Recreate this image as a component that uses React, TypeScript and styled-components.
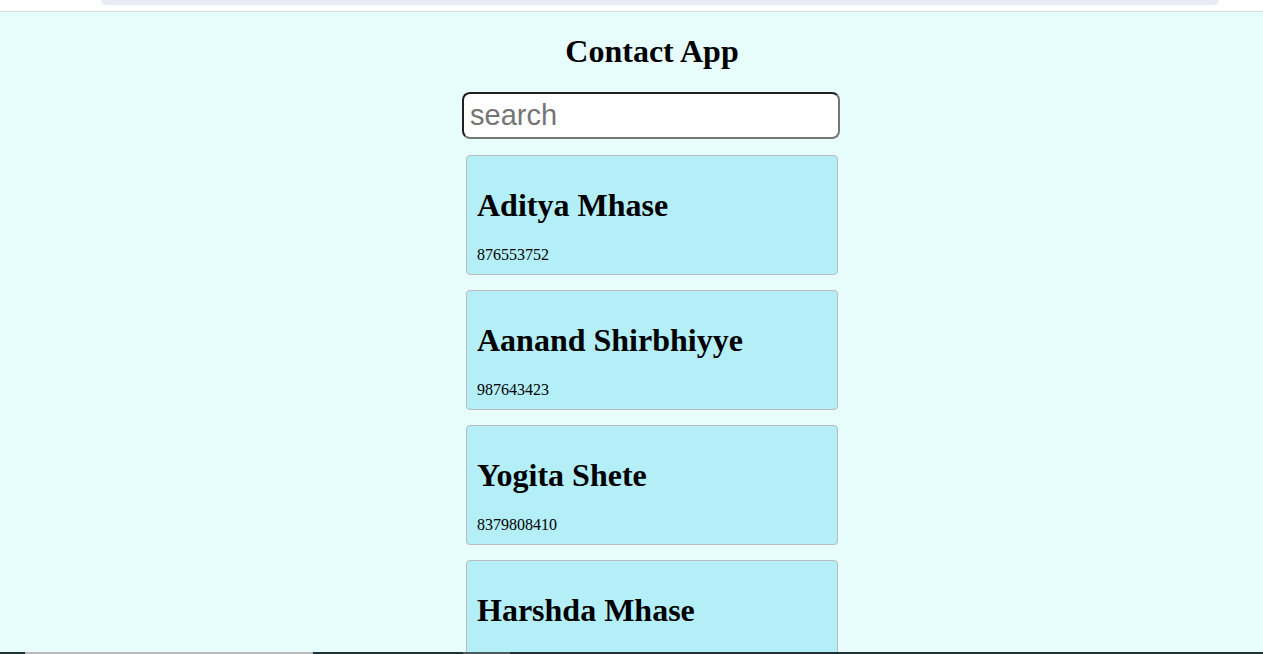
import React, { useState } from 'react';
import styled, { createGlobalStyle } from 'styled-components';

/* --------------------------------- styles --------------------------------- */

const GlobalStyle = createGlobalStyle`
  html, body {
    margin: 0;
    padding: 0;
    height: 100%;
    overflow: hidden;
  }
  body {
    font-family: "Liberation Serif", "Times New Roman", serif;
    color: #000;
  }
`;

const Screen = styled.div`
  display: flex;
  flex-direction: column;
  height: 100vh;
  background: #e6fdfc;
`;

const Chrome = styled.div`
  flex: 0 0 11px;
  display: flex;
  justify-content: flex-start;
  padding: 0 44px 0 101px;
  background: #ffffff;
  border-bottom: 1px solid #dadce0;
`;

const ChromeBar = styled.div`
  flex: 1;
  height: 5px;
  background: #e9ecf5;
  border-radius: 0 0 8px 8px;
`;

const Main = styled.main`
  flex: 1;
  min-height: 0;
  overflow: hidden;
  display: flex;
  flex-direction: column;
  align-items: center;
  padding-left: 41px;
`;

const Title = styled.h1`
  margin: 21.44px 0;
  font-size: 32px;
  font-weight: bold;
  line-height: normal;
`;

const Search = styled.input`
  box-sizing: border-box;
  width: 378px;
  height: 47px;
  margin-right: 2px;
  padding: 5px 6px;
  font-family: "Liberation Sans", Arial, sans-serif;
  font-size: 29px;
  border-radius: 8px;
  border-width: 2px;
  border-style: solid;
  border-color: #1f1f1f #767676 #767676 #1f1f1f;
  background: #fff;
  outline: none;

  &::placeholder {
    color: #757575;
  }
`;

const List = styled.div`
  display: flex;
  flex-direction: column;
  gap: 15px;
  margin-top: 16px;
`;

const Card = styled.div`
  box-sizing: border-box;
  width: 372px;
  padding: 10px;
  background: #b4eef7;
  border: 1px solid #bcbcbc;
  border-radius: 4px;
`;

const Name = styled.h1`
  margin: 21.44px 0;
  font-size: 32px;
  font-weight: bold;
  line-height: normal;
`;

const Phone = styled.p`
  margin: 0;
  font-size: 16px;
  line-height: normal;
`;

const Taskbar = styled.div`
  flex: 0 0 2px;
  display: flex;
  background: #1d3336;
`;

const TaskSegment = styled.div<{ $left: number; $width: number; $color: string }>`
  margin-left: ${(p) => p.$left}px;
  width: ${(p) => p.$width}px;
  background: ${(p) => p.$color};
`;

/* ---------------------------------- data ---------------------------------- */

type Contact = {
  name: string;
  phone: string;
};

const contacts: Contact[] = [
  { name: 'Aditya Mhase', phone: '876553752' },
  { name: 'Aanand Shirbhiyye', phone: '987643423' },
  { name: 'Yogita Shete', phone: '8379808410' },
  { name: 'Harshda Mhase', phone: '9823456712' },
];

/* -------------------------------- component ------------------------------- */

const App = () => {
  const [query, setQuery] = useState('');

  const shown = contacts.filter((c) =>
    c.name.toLowerCase().includes(query.toLowerCase()),
  );

  return (
    <Screen>
      <GlobalStyle />
      <Chrome>
        <ChromeBar />
      </Chrome>

      <Main>
        <Title>Contact App</Title>
        <Search
          type="text"
          placeholder="search"
          value={query}
          onChange={(e) => setQuery(e.target.value)}
        />
        <List>
          {shown.map((c) => (
            <Card key={c.name}>
              <Name>{c.name}</Name>
              <Phone>{c.phone}</Phone>
            </Card>
          ))}
        </List>
      </Main>

      <Taskbar>
        <TaskSegment $left={25} $width={288} $color="#b9b9b9" />
        <TaskSegment $left={150} $width={47} $color="#4a5b5e" />
      </Taskbar>
    </Screen>
  );
};

export default App;
